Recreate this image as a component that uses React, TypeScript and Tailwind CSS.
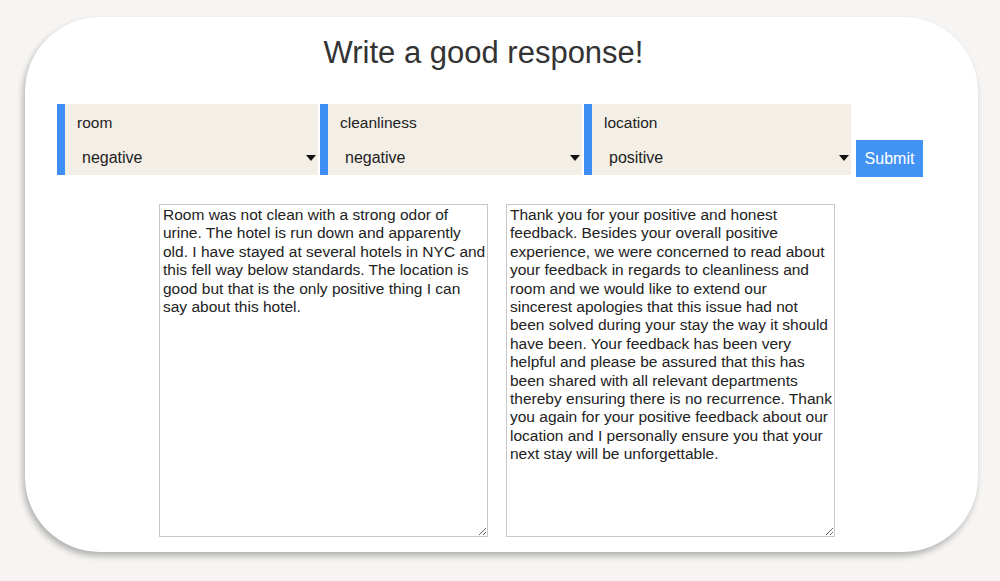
import { useState } from "react";

const aspects = [
  { label: "room", value: "negative", width: "w-[261px]" },
  { label: "cleanliness", value: "negative", width: "w-[262px]" },
  { label: "location", value: "positive", width: "w-[267px]" },
];

const review =
  "Room was not clean with a strong odor of urine. The hotel is run down and apparently old. I have stayed at several hotels in NYC and this fell way below standards. The location is good but that is the only positive thing I can say about this hotel.";

const reply =
  "Thank you for your positive and honest feedback. Besides your overall positive experience, we were concerned to read about your feedback in regards to cleanliness and room and we would like to extend our sincerest apologies that this issue had not been solved during your stay the way it should have been. Your feedback has been very helpful and please be assured that this has been shared with all relevant departments thereby ensuring there is no recurrence. Thank you again for your positive feedback about our location and I personally ensure you that your next stay will be unforgettable.";

function Caret() {
  return (
    <svg width="10" height="6" viewBox="0 0 10 6" className="shrink-0">
      <path d="M0 0 L10 0 L5 6 Z" fill="#111" />
    </svg>
  );
}

const areaClass =
  "h-[333px] w-[329px] resize border border-[#c8c8c8] pl-[3px] pr-[1px] pt-[1px] font-['Liberation_Sans',Arial,sans-serif] text-[15.5px] leading-[18.4px] text-[#222] outline-none";

export default function App() {
  const [left, setLeft] = useState(review);
  const [right, setRight] = useState(reply);

  return (
    <div className="min-h-[581px] w-full bg-[#f6f5f3] pt-[17px] font-['Liberation_Sans',Arial,sans-serif] text-[#222]">
      <div className="ml-[25px] flex h-[535px] w-[953px] flex-col rounded-[75px] bg-white shadow-[-2px_4px_6px_rgba(0,0,0,0.28)]">
        {/* Title */}
        <h1 className="pr-[36px] pt-[18px] text-center text-[31px] leading-[36px] text-[#333]">
          Write a good response!
        </h1>

        {/* Aspect selectors */}
        <div className="mt-[33px] flex items-end pl-[32px]">
          <div className="flex gap-[2px]">
            {aspects.map((a) => (
              <div
                key={a.label}
                className={`${a.width} h-[71px] border-l-[8px] border-[#3e8ef3] bg-[#f3efe7] pl-[12px] pr-[2px] pt-[10px]`}
              >
                <div className="text-[15.5px] leading-[18px]">{a.label}</div>
                <div className="mt-[16px] flex items-center justify-between pl-[5px]">
                  <span className="text-[16px] leading-[20px]">{a.value}</span>
                  <Caret />
                </div>
              </div>
            ))}
          </div>
          <button className="mb-[-2px] ml-[5px] h-[37px] w-[67px] bg-[#4393f5] text-[16px] text-white">
            Submit
          </button>
        </div>

        {/* Review and response */}
        <div className="mt-[29px] flex gap-[18px] pl-[134px]">
          <textarea value={left} onChange={(e) => setLeft(e.target.value)} className={areaClass} />
          <textarea value={right} onChange={(e) => setRight(e.target.value)} className={areaClass} />
        </div>
      </div>
    </div>
  );
}
